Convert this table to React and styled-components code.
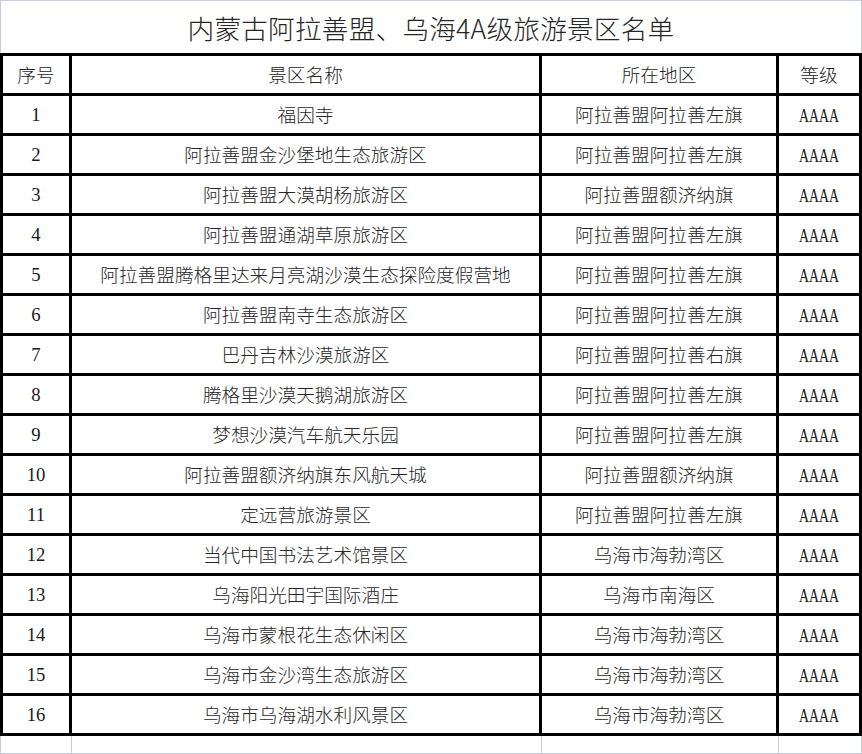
import React from "react";
import styled, { createGlobalStyle } from "styled-components";

const Global = createGlobalStyle`
  html, body { margin: 0; padding: 0; background: #fff; }
  body { width: 862px; height: 754px; overflow: hidden; }
`;

const GRID = "#c6ccdb";
const COLS = "69px 470px 237px 83px";

const Sheet = styled.div`
  width: 862px;
  height: 754px;
  display: flex;
  flex-direction: column;
  font-family: "Noto Sans CJK SC", "Noto Sans", sans-serif;
  color: #262626;
`;

const TitleBar = styled.div`
  box-sizing: content-box;
  height: 52px;
  border-top: 1px solid ${GRID};
  border-left: 1px solid ${GRID};
  border-right: 1px solid ${GRID};
  display: flex;
  align-items: center;
  justify-content: center;
  font-size: 26.67px;
  font-weight: 300;
  letter-spacing: 0.2px;
  padding-bottom: 0;
`;

const Table = styled.div`
  border-top: 3px solid #000;
  border-left: 3px solid #000;
  display: flex;
  flex-direction: column;
`;

const Row = styled.div`
  display: grid;
  grid-template-columns: ${COLS};
  height: 40px;
`;

const Cell = styled.div`
  box-sizing: border-box;
  border-right: 3px solid #000;
  border-bottom: 3px solid #000;
  display: flex;
  align-items: center;
  justify-content: center;
  font-size: 18.67px;
  font-weight: 300;
  white-space: nowrap;
  padding-bottom: 3px;
`;

const Num = styled.span`
  font-family: "Liberation Serif", serif;
  font-size: 18.67px;
  font-weight: 400;
  color: #1a1a1a;
  margin-top: 4px;
`;

const Grade = styled.span`
  display: inline-block;
  font-family: "Liberation Serif", serif;
  font-size: 18.67px;
  font-weight: 400;
  color: #1a1a1a;
  transform: scaleX(0.74);
  margin-top: 5px;
`;

const EmptyRow = styled.div`
  display: grid;
  grid-template-columns: 71px 470px 237px 83px;
  height: 17px;
  width: 861px;
  border-bottom: 1px solid ${GRID};
  border-left: 1px solid ${GRID};
`;

const EmptyCell = styled.div`
  border-right: 1px solid ${GRID};
  box-sizing: border-box;
`;

const data = [
  ["福因寺", "阿拉善盟阿拉善左旗"],
  ["阿拉善盟金沙堡地生态旅游区", "阿拉善盟阿拉善左旗"],
  ["阿拉善盟大漠胡杨旅游区", "阿拉善盟额济纳旗"],
  ["阿拉善盟通湖草原旅游区", "阿拉善盟阿拉善左旗"],
  ["阿拉善盟腾格里达来月亮湖沙漠生态探险度假营地", "阿拉善盟阿拉善左旗"],
  ["阿拉善盟南寺生态旅游区", "阿拉善盟阿拉善左旗"],
  ["巴丹吉林沙漠旅游区", "阿拉善盟阿拉善右旗"],
  ["腾格里沙漠天鹅湖旅游区", "阿拉善盟阿拉善左旗"],
  ["梦想沙漠汽车航天乐园", "阿拉善盟阿拉善左旗"],
  ["阿拉善盟额济纳旗东风航天城", "阿拉善盟额济纳旗"],
  ["定远营旅游景区", "阿拉善盟阿拉善左旗"],
  ["当代中国书法艺术馆景区", "乌海市海勃湾区"],
  ["乌海阳光田宇国际酒庄", "乌海市南海区"],
  ["乌海市蒙根花生态休闲区", "乌海市海勃湾区"],
  ["乌海市金沙湾生态旅游区", "乌海市海勃湾区"],
  ["乌海市乌海湖水利风景区", "乌海市海勃湾区"],
];

export default function App() {
  return (
    <>
      <Global />
      <Sheet>
        <TitleBar>内蒙古阿拉善盟、乌海4A级旅游景区名单</TitleBar>
        <Table>
          <Row>
            <Cell>序号</Cell>
            <Cell>景区名称</Cell>
            <Cell>所在地区</Cell>
            <Cell>等级</Cell>
          </Row>
          {data.map(([name, area], i) => (
            <Row key={i}>
              <Cell>
                <Num>{i + 1}</Num>
              </Cell>
              <Cell>{name}</Cell>
              <Cell>{area}</Cell>
              <Cell>
                <Grade>AAAA</Grade>
              </Cell>
            </Row>
          ))}
        </Table>
        <EmptyRow>
          <EmptyCell />
          <EmptyCell />
          <EmptyCell />
          <EmptyCell />
        </EmptyRow>
      </Sheet>
    </>
  );
}
